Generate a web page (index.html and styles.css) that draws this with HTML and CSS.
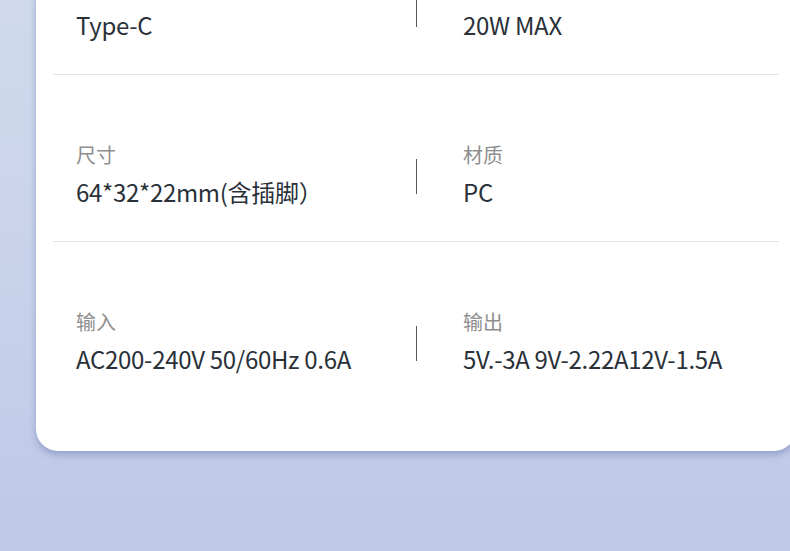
FILE: index.html
```html
<!DOCTYPE html>
<html lang="zh-CN">
<head>
    <meta charset="UTF-8">
    <meta name="viewport" content="width=device-width, initial-scale=1.0">
    <title>产品参数</title>
    <link rel="stylesheet" href="styles.css">
</head>
<body>
    <div class="spec-card">
        <div class="spec-row">
            <div class="spec-cell">
                <div class="spec-label">接口</div>
                <div class="spec-value">Type-C</div>
            </div>
            <div class="spec-divider"></div>
            <div class="spec-cell">
                <div class="spec-label">功率</div>
                <div class="spec-value">20W MAX</div>
            </div>
        </div>
        <div class="spec-row">
            <div class="spec-cell">
                <div class="spec-label">尺寸</div>
                <div class="spec-value">64*32*22mm(含插脚）</div>
            </div>
            <div class="spec-divider"></div>
            <div class="spec-cell">
                <div class="spec-label">材质</div>
                <div class="spec-value">PC</div>
            </div>
        </div>
        <div class="spec-row">
            <div class="spec-cell">
                <div class="spec-label">输入</div>
                <div class="spec-value">AC200-240V 50/60Hz 0.6A</div>
            </div>
            <div class="spec-divider"></div>
            <div class="spec-cell">
                <div class="spec-label">输出</div>
                <div class="spec-value">5V.-3A 9V-2.22A12V-1.5A</div>
            </div>
        </div>
    </div>
</body>
</html>
```

FILE: styles.css
```css
/* page */
* {
    margin: 0;
    padding: 0;
    box-sizing: border-box;
}

html, body {
    height: 100%;
}

body {
    font-family: "Noto Sans CJK SC", "Noto Sans", sans-serif;
    background: linear-gradient(180deg, #d0daec 0%, #c7d0ea 60%, #bec8e7 100%);
    overflow: hidden;
}

/* card */
.spec-card {
    width: 760px;
    margin: -92px 0 0 36px;
    padding: 0 17px 43px;
    background: #fff;
    border-radius: 0 0 22px 22px;
    box-shadow: 0 4px 7px rgba(92, 110, 168, 0.45);
}

.spec-row {
    display: flex;
    align-items: center;
    padding: 65px 0 31px 23px;
    border-bottom: 1px solid #e2e2e4;
}

.spec-row:last-child {
    border-bottom: none;
}

.spec-cell:first-child {
    width: 340px;
}

.spec-cell:last-child {
    padding-left: 46px;
}

.spec-divider {
    width: 1px;
    height: 35px;
    margin-top: 2px;
    background: #55585c;
}

.spec-label {
    font-size: 20px;
    line-height: 30px;
    color: #8e8e8e;
}

.spec-value {
    margin-top: 4px;
    font-size: 24px;
    line-height: 36px;
    color: #2a3139;
    letter-spacing: -0.3px;
    white-space: nowrap;
}
```
